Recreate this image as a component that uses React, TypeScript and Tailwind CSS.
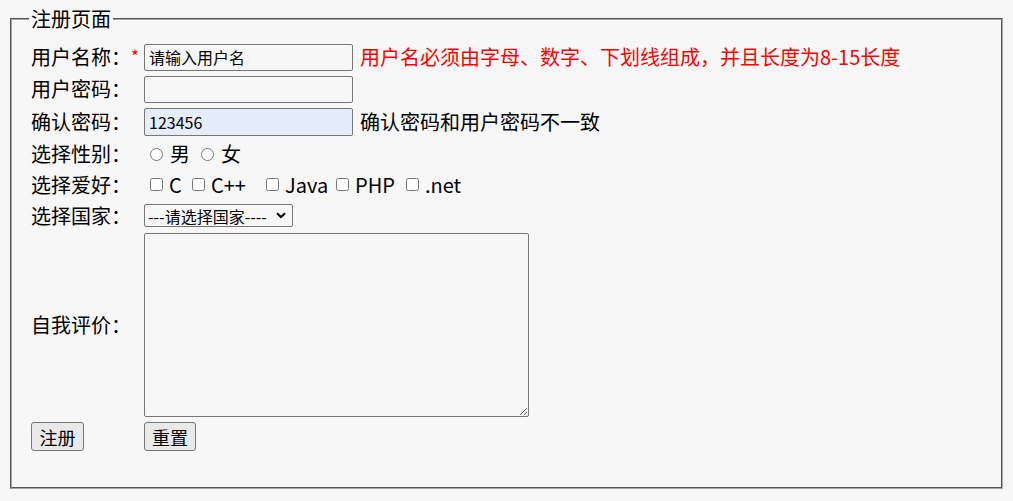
import React from "react";

const font = { fontFamily: '"Microsoft YaHei", "Noto Sans CJK SC", sans-serif' };

export default function App() {
  const label = "w-[113px] shrink-0 text-[20px] leading-[26px] text-black";
  const field =
    "h-[27px] w-[209px] rounded-[2px] border border-[#767676] bg-transparent px-[4px] text-[16px] text-black outline-none";
  const btn =
    "h-[29px] rounded-[3px] border border-[#767676] bg-[#e9e9e9] text-[18px] leading-[24px] text-black";
  return (
    <div className="min-h-[501px] w-full bg-[#f7f7f7] px-[10px] pt-[6px]" style={font}>
      <fieldset className="h-[483px] border-2 [border-style:groove] border-[#a8a8a8] pl-[19px] pr-[12px] pt-[9px]">
        <legend className="-ml-[2px] px-[2px] text-[20px] leading-[26px] text-black">注册页面</legend>
        <div className="flex flex-col">
          <div className="flex h-[32px] items-center">
            <span className={label}>
              用户名称：<span className="relative -top-[2px] text-[17px] text-[#ff0000]">*</span>
            </span>
            <input className={field} defaultValue="请输入用户名" />
            <span className="ml-[7px] text-[20px] leading-[26px] text-[#ff0000]">
              用户名必须由字母、数字、下划线组成，并且长度为8-15长度
            </span>
          </div>
          <div className="flex h-[32px] items-center">
            <span className={label}>用户密码：</span>
            <input type="password" className={field} />
          </div>
          <div className="flex h-[34px] items-center">
            <span className={label}>确认密码：</span>
            <input className={field + " !h-[28px] !bg-[#e6edfa]"} defaultValue="123456" />
            <span className="ml-[7px] text-[20px] leading-[26px] text-black">确认密码和用户密码不一致</span>
          </div>
          <div className="flex h-[30px] items-center">
            <span className={label}>选择性别：</span>
            <label className="ml-[6px] flex w-[51px] items-center text-[20px] leading-[26px]">
              <input type="radio" name="sex" className="m-0 h-[13px] w-[13px]" />
              <span className="ml-[7px]">男</span>
            </label>
            <label className="flex items-center text-[20px] leading-[26px]">
              <input type="radio" name="sex" className="m-0 h-[13px] w-[13px]" />
              <span className="ml-[7px]">女</span>
            </label>
          </div>
          <div className="flex h-[31px] items-center">
            <span className={label}>选择爱好：</span>
            {[
              ["C", "ml-[6px] w-[42px]"],
              ["C++", "w-[74px]"],
              ["Java", "w-[70px]"],
              ["PHP", "w-[70px]"],
              [".net", ""],
            ].map(([t, m]) => (
              <label key={t} className={"flex items-center text-[20px] leading-[26px] " + m}>
                <input type="checkbox" className="m-0 h-[13px] w-[13px]" />
                <span className="ml-[6px]">{t}</span>
              </label>
            ))}
          </div>
          <div className="flex h-[31px] items-center">
            <span className={label}>选择国家：</span>
            <div className="relative">
              <select className="h-[23px] w-[149px] appearance-none rounded-[2px] border border-[#767676] bg-transparent pl-[3px] text-[16px] leading-[20px] text-black outline-none">
                <option>---请选择国家----</option>
              </select>
              <svg
                className="pointer-events-none absolute right-[7px] top-[8px]"
                width="10"
                height="7"
                viewBox="0 0 10 7"
              >
                <path d="M1 1.2 L5 5 L9 1.2" fill="none" stroke="#000" strokeWidth="2" />
              </svg>
            </div>
          </div>
          <div className="flex h-[188px] items-center">
            <span className={label}>自我评价：</span>
            <textarea className="h-[184px] w-[385px] rounded-[2px] border border-[#767676] bg-transparent outline-none" />
          </div>
          <div className="flex h-[35px] items-center">
            <span className="w-[113px] shrink-0">
              <button className={btn + " w-[53px]"}>注册</button>
            </span>
            <button className={btn + " w-[52px]"}>重置</button>
          </div>
        </div>
      </fieldset>
    </div>
  );
}
